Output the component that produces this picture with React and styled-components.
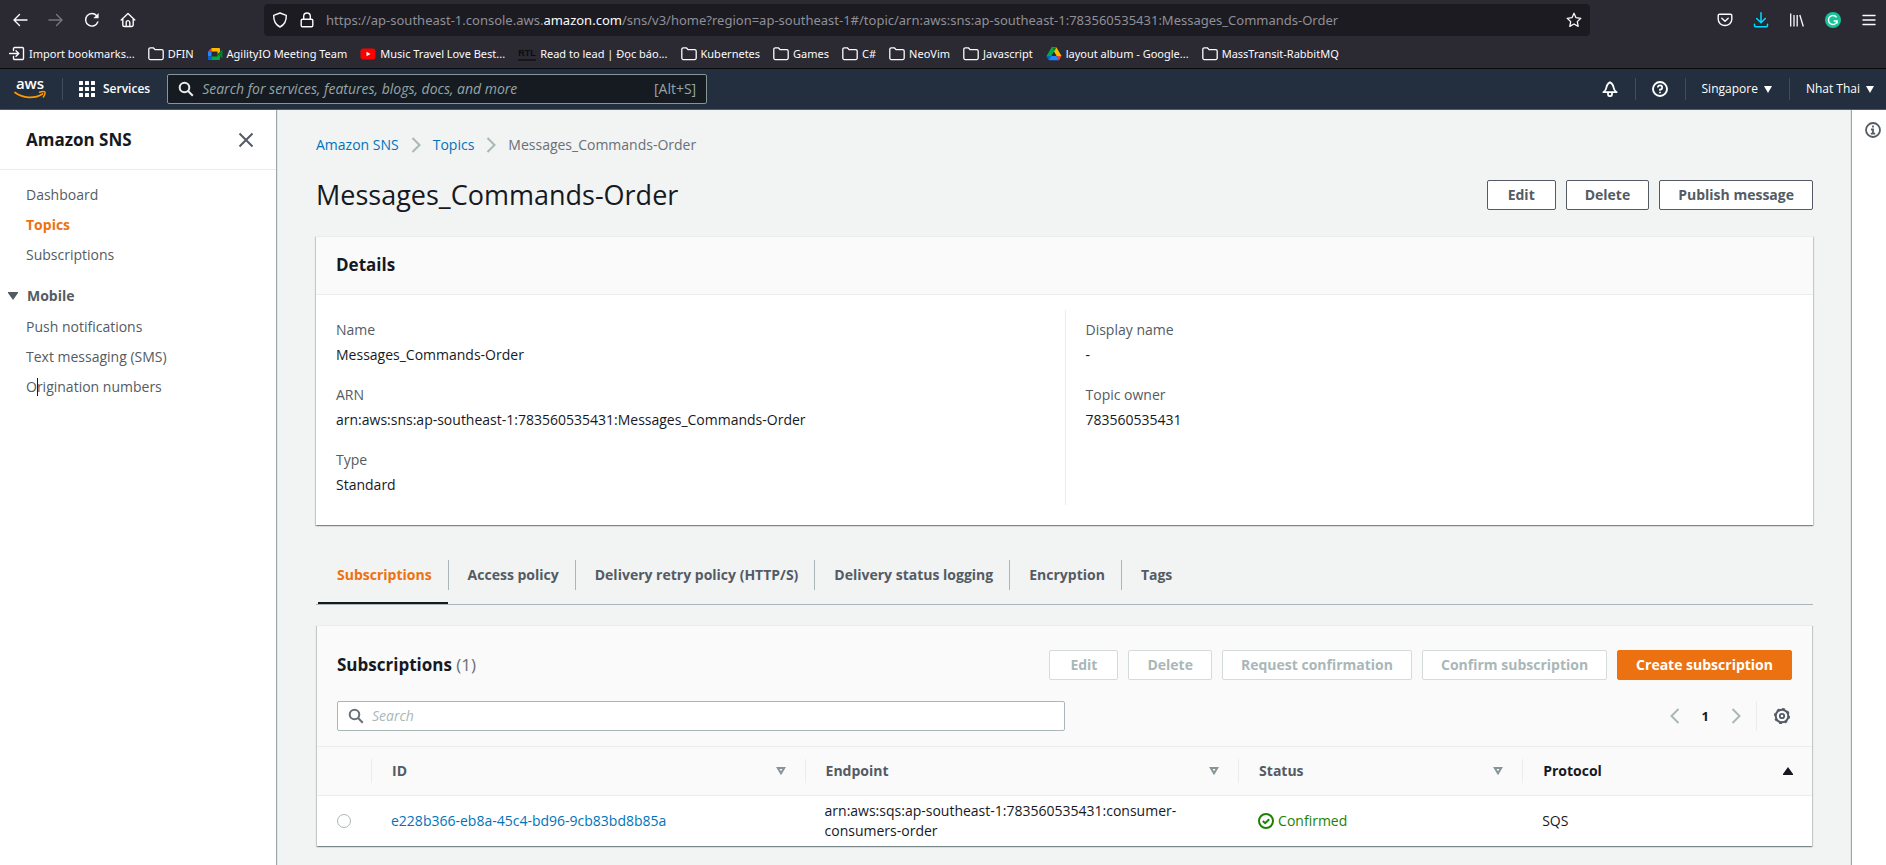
import React from 'react';
import styled, { createGlobalStyle, css } from 'styled-components';

const GlobalStyle = createGlobalStyle`
  * { box-sizing: border-box; }
  body {
    margin: 0;
    background: #f2f3f3;
    color: #16191f;
    font: 14px/22px "Open Sans", "Noto Sans", sans-serif;
  }
  button, input { font: inherit; color: inherit; }
  a { text-decoration: none; }
  svg { display: block; flex: none; }
  h1, h2, ul, dl, dd, ol { margin: 0; padding: 0; }
  ul, ol { list-style: none; }
`;

const Page = styled.div`
  display: flex;
  flex-direction: column;
  min-height: 100vh;
`;

/* ---------- browser chrome ---------- */

const Chrome = styled.header`
  background: #2b2a33;
  color: #fbfbfe;
  border-bottom: 1px solid #0c0c0d;
  font-family: "Noto Sans", "Open Sans", sans-serif;
`;

const Toolbar = styled.div`
  display: flex;
  align-items: center;
  height: 40px;
  padding: 0 9px 0 12px;
`;

const ToolGroup = styled.div`
  display: flex;
  gap: 20px;
`;

const IconButton = styled.button`
  display: grid;
  place-items: center;
  padding: 0;
  border: 0;
  background: none;
  color: ${(p) => p.$color || 'inherit'};
  cursor: pointer;
`;

const UrlBar = styled.div`
  flex: 1;
  display: flex;
  align-items: center;
  gap: 11px;
  height: 32px;
  min-width: 0;
  margin: 0 127px 0 128px;
  padding: 0 8px;
  border-radius: 4px;
  background: #1c1b22;
`;

const UrlText = styled.div`
  flex: 1;
  min-width: 0;
  overflow: hidden;
  white-space: nowrap;
  font-size: 13px;
  color: #8f8f96;
  b { font-weight: 400; color: #fbfbfe; }
`;

const Bookmarks = styled.nav`
  display: flex;
  align-items: center;
  gap: 13px;
  height: 28px;
  padding: 0 9px;
  overflow: hidden;
`;

const Bookmark = styled.a`
  display: flex;
  align-items: center;
  gap: 4px;
  color: #fbfbfe;
  font-size: 11px;
  line-height: 16px;
  white-space: nowrap;
`;

/* ---------- console navigation ---------- */

const ConsoleNav = styled.nav`
  display: flex;
  align-items: center;
  height: 41px;
  background: #232f3e;
  border-bottom: 1px solid #545b64;
  color: #fff;
  font-size: 12px;
`;

const LogoLink = styled.a`
  padding: 0 15px 0 14px;
`;

const NavCell = styled.div`
  display: flex;
  align-items: center;
  height: 22px;
  padding: 0 ${(p) => (p.$end ? 12 : 17)}px 0 16px;
  border-left: 1px solid ${(p) => (p.$plain ? 'transparent' : '#414d5c')};
`;

const NavButton = styled.button`
  display: flex;
  align-items: center;
  gap: ${(p) => (p.$strong ? 8 : 6)}px;
  padding: 0;
  border: 0;
  background: none;
  font-weight: ${(p) => (p.$strong ? 600 : 400)};
  cursor: pointer;
`;

const NavSearch = styled.label`
  display: flex;
  align-items: center;
  gap: 8px;
  width: 540px;
  height: 30px;
  padding: 0 10px;
  border: 1px solid #879596;
  border-radius: 2px;
  background: #161b22;
  color: #95a5a6;
  font-size: 14px;
`;

const BareInput = styled.input`
  flex: 1;
  min-width: 0;
  padding: 0;
  border: 0;
  outline: 0;
  background: none;
  &::placeholder {
    color: ${(p) => p.$hint};
    font-style: italic;
    opacity: 1;
  }
`;

const NavRight = styled.div`
  display: flex;
  align-items: center;
  margin-left: auto;
`;

/* ---------- page body ---------- */

const Body = styled.div`
  flex: 1;
  display: flex;
`;

const panelShadow = css`
  box-shadow: 0 1px 1px rgba(0, 28, 36, 0.3), 1px 1px 1px rgba(0, 28, 36, 0.15), -1px 1px 1px rgba(0, 28, 36, 0.15);
`;

const Sidebar = styled.aside`
  flex: none;
  width: 276px;
  background: #fff;
  box-shadow: 1px 0 1px rgba(0, 28, 36, 0.35);
`;

const SidebarHeader = styled.div`
  display: flex;
  align-items: center;
  justify-content: space-between;
  height: 60px;
  padding: 0 22px 0 26px;
  border-bottom: 1px solid #eaeded;
`;

const Heading = styled.h2`
  font-size: 17px;
  line-height: 22px;
  font-weight: 700;
  span { font-weight: 400; color: #687078; }
`;

const SideList = styled.ul`
  display: flex;
  flex-direction: column;
  gap: 8px;
  padding: ${(p) => (p.$nested ? 9 : 14)}px 26px 0;
`;

const SideLink = styled.a`
  position: relative;
  color: ${(p) => (p.$active ? '#ec7211' : '#545b64')};
  font-weight: ${(p) => (p.$active ? 700 : 400)};
`;

const TextCaret = styled.i`
  position: absolute;
  left: 11px;
  top: 1px;
  width: 1px;
  height: 18px;
  background: #16191f;
`;

const SectionToggle = styled.button`
  display: flex;
  align-items: center;
  gap: 9px;
  margin-top: 19px;
  padding: 0 8px;
  border: 0;
  background: none;
  color: #545b64;
  font-weight: 700;
`;

const Main = styled.main`
  flex: 1;
  min-width: 0;
  padding: 24px 39px 20px 40px;
`;

const HelpRail = styled.aside`
  flex: none;
  width: 34px;
  padding-top: 12px;
  padding-left: 13px;
  background: #fff;
  box-shadow: -1px 0 1px rgba(0, 28, 36, 0.35);
`;

const Breadcrumbs = styled.ol`
  display: flex;
  li { display: flex; align-items: center; color: #687078; }
  a { color: #0073bb; }
  svg { margin: 0 12px; color: #aab7b8; }
`;

const Row = styled.div`
  display: flex;
  align-items: center;
  justify-content: space-between;
  gap: 10px;
`;

const TitleRow = styled(Row)`
  margin: 21px 0 23px;
`;

const Title = styled.h1`
  font-size: 27px;
  line-height: 36px;
  font-weight: 400;
`;

const Actions = styled.div`
  display: flex;
  gap: 10px;
`;

const Button = styled.button`
  height: 30px;
  min-width: 69px;
  padding: 0 18px;
  border: 1px solid #545b64;
  border-radius: 2px;
  background: #fff;
  color: #545b64;
  font-weight: 700;
  line-height: 20px;
  white-space: nowrap;
  &:disabled { border-color: #d5dbdb; color: #aab7b8; }
  ${(p) => p.$primary && css`
    border-color: #ec7211;
    background: #ec7211;
    color: #fff;
  `}
`;

const Card = styled.section`
  border-top: 1px solid #eaeded;
  background: #fff;
  ${panelShadow}
`;

const TabPanel = styled(Card)`
  margin: 0 1px;
`;

const CardHeader = styled.div`
  padding: 17px 20px 18px;
  border-bottom: 1px solid #eaeded;
  background: #fafafa;
`;

const DetailGrid = styled.div`
  display: grid;
  grid-template-columns: 1fr 1fr;
  padding: 15px 0 20px;
`;

const DetailColumn = styled.dl`
  display: flex;
  flex-direction: column;
  gap: 18px;
  padding: 9px 20px;
  & + & { border-left: 1px solid #eaeded; }
  dt { margin-bottom: 3px; color: #545b64; }
`;

const TabList = styled.ul`
  display: flex;
  margin: 35px 0 20px;
  padding-left: 2px;
  border-bottom: 1px solid #aab7b8;
`;

const TabItem = styled.li`
  display: flex;
  &:not(:last-child)::after {
    content: '';
    width: 1px;
    height: 30px;
    background: #aab7b8;
  }
`;

const Tab = styled.button`
  height: 44px;
  padding: 0 16px 12px 19px;
  border: 0;
  border-bottom: 2px solid ${(p) => (p.$active ? '#16191f' : 'transparent')};
  background: none;
  color: ${(p) => (p.$active ? '#ec7211' : '#545b64')};
  font-weight: 700;
`;

const TableTools = styled.div`
  padding: 24px 20px 15px;
  background: #fafafa;
`;

const FilterRow = styled(Row)`
  margin-top: 21px;
`;

const FilterBox = styled.label`
  display: flex;
  align-items: center;
  gap: 8px;
  width: 50%;
  height: 30px;
  padding: 0 10px;
  border: 1px solid #aab7b8;
  border-radius: 2px;
  background: #fff;
  color: #687078;
`;

const Pager = styled.div`
  display: flex;
  align-items: center;
  gap: 22px;
  font-size: 13px;
  font-weight: 700;
`;

const PagerSettings = styled.div`
  display: flex;
  align-items: center;
  height: 30px;
  margin-left: -7px;
  padding: 0 2px 0 17px;
  border-left: 1px solid #eaeded;
`;

const Table = styled.table`
  width: 100%;
  table-layout: fixed;
  border-collapse: collapse;
  td { height: 50px; padding: 5px 20px; line-height: 20px; }
  a { color: #0073bb; }
`;

const Col = styled.col`
  width: ${(p) => p.$width};
`;

const HeadCell = styled.th`
  height: 49px;
  padding: 0;
  border: solid #eaeded;
  border-width: 1px 0;
  background: #fafafa;
  color: ${(p) => (p.$sorted ? '#16191f' : '#545b64')};
  text-align: left;
`;

const HeadInner = styled.div`
  display: flex;
  align-items: center;
  justify-content: space-between;
  height: 24px;
  padding: 0 19px 0 20px;
  border-left: 1px solid #eaeded;
`;

const Radio = styled.input`
  appearance: none;
  display: block;
  width: 14px;
  height: 14px;
  margin: 0;
  border: 1px solid #aab7b8;
  border-radius: 50%;
  background: #fff;
`;

const Status = styled.span`
  display: flex;
  align-items: center;
  gap: 4px;
  color: #1d8102;
`;

/* ---------- icons ---------- */

const Icon = ({ size = 16, sw = 2, children, ...rest }) => (
  <svg width={size} height={size} viewBox="0 0 16 16" fill="none" stroke="currentColor" strokeWidth={sw} aria-hidden="true" {...rest}>
    {children}
  </svg>
);

const Back = () => <Icon sw="1.4"><path d="M15 8H2M7.5 2.5 2 8l5.5 5.5" strokeLinecap="round" strokeLinejoin="round" /></Icon>;
const Forward = () => <Icon sw="1.4"><path d="M1 8h13M8.5 2.5 14 8l-5.500 5.500" strokeLinecap="round" strokeLinejoin="round" /></Icon>;
const Reload = () => <Icon sw="1.4"><path d="M13.800 10A6.300 6.300 0 1 1 12.700 3.700" strokeLinecap="round" /><path d="M14.600 1v5.200H9.400z" fill="currentColor" stroke="none" /></Icon>;
const HomeIcon = () => <Icon sw="1.4"><path d="M1.200 8 8 1.500 14.800 8M2.800 6.800V13a1.500 1.500 0 0 0 1.500 1.500h7.400a1.500 1.500 0 0 0 1.500-1.500V6.800M6.200 14.300V10.400a1.800 1.800 0 0 1 3.600 0v3.900" strokeLinecap="round" strokeLinejoin="round" /></Icon>;
const Shield = () => <Icon sw="1.4"><path d="M8 1 14.300 3.300C14.500 8.500 12.500 12.800 8 15 3.500 12.800 1.500 8.500 1.700 3.300z" strokeLinejoin="round" /></Icon>;
const Lock = () => <Icon sw="1.400"><rect x="2.200" y="7.200" width="11.600" height="7.600" rx="1.300" /><path d="M4.700 7V4.300a3.300 3.300 0 0 1 6.600 0V7" /></Icon>;
const StarIcon = () => <Icon sw="1.300"><path d="m8 1.300 2 4.400 4.800.6-3.500 3.300.9 4.800L8 12l-4.200 2.400.9-4.800L1.200 6.300 6 5.700z" strokeLinejoin="round" /></Icon>;
const Pocket = () => <Icon sw="1.400"><path d="M2.500 2.200h11a1.300 1.300 0 0 1 1.300 1.300v3.700a6.800 6.300 0 0 1-13.600 0V3.500a1.300 1.300 0 0 1 1.300-1.300z" /><path d="m4.800 6.300 3.200 3 3.200-3" strokeLinecap="round" strokeLinejoin="round" /></Icon>;
const Download = () => <Icon sw="1.500"><path d="M8 .8v9.700M3.700 6.500 8 10.700l4.300-4.200M1.500 12.200v1.300a1.300 1.300 0 0 0 1.300 1.300h10.400a1.300 1.300 0 0 0 1.300-1.300v-1.300" strokeLinecap="round" strokeLinejoin="round" /></Icon>;
const Library = () => <Icon sw="1.300"><path d="M1.700 1.500v13M5 3v11.500M8.200 3v11.500M10.800 3l3.500 11.500" /></Icon>;
const Grammarly = () => (
  <Icon>
    <circle cx="8" cy="8" r="8" fill="#15c39a" stroke="none" />
    <path d="M11.600 5.300A4.500 4.500 0 1 0 12 10M8.700 9h3.400v2.600" stroke="#fff" strokeWidth="1.400" />
  </Icon>
);
const Menu = () => <Icon sw="1.400"><path d="M2 3.500h12M2 8h12M2 12.500h12" strokeLinecap="round" /></Icon>;
const ImportIcon = () => <Icon sw="1.400"><path d="M4.500 4.500v-2A1.200 1.200 0 0 1 5.700 1.500h7.600a1.200 1.200 0 0 1 1.200 1.200v9.600a1.200 1.200 0 0 1-1.200 1.200H5.700a1.200 1.200 0 0 1-1.200-1.200v-1.800M.5 7.500h9M7 4.700l2.800 2.800L7 10.300" strokeLinecap="round" strokeLinejoin="round" /></Icon>;
const Folder = () => <Icon sw="1.300"><path d="M.8 3.300A1.500 1.500 0 0 1 2.300 1.800h3l1.900 1.900h6.500a1.500 1.500 0 0 1 1.500 1.500v6.900a1.500 1.500 0 0 1-1.500 1.500H2.300a1.500 1.500 0 0 1-1.500-1.500z" strokeLinejoin="round" /></Icon>;
const Meet = () => (
  <Icon stroke="none">
    <path d="M4.500 2v3.500H1z" fill="#ea4335" />
    <path d="M1 5.500h3.500v5H1z" fill="#2684fc" />
    <path d="M1 10.500h3.500V14H2a1 1 0 0 1-1-1z" fill="#0066da" />
    <path d="M4.500 10.500h6V8l2.500 2v3a1 1 0 0 1-1 1H4.500z" fill="#00ac47" />
    <path d="M4.500 2H12a1 1 0 0 1 1 1v3l-2.500 2V5.500h-6z" fill="#ffba00" />
    <path d="M10.500 8 15.500 3.500v9z" fill="#00832d" />
  </Icon>
);
const Youtube = () => (
  <Icon stroke="none">
    <rect x=".5" y="2.500" width="15" height="11" rx="3" fill="#f00" />
    <path d="M6.500 5.700v4.600l4-2.300z" fill="#fff" />
  </Icon>
);
const RtlMark = styled.span`
  width: 18px;
  border-bottom: 2px solid #17161c;
  color: #0c0c0d;
  font: 700 9px/12px "Liberation Sans", Arial, sans-serif;
`;
const Drive = () => (
  <Icon stroke="none">
    <path d="M5.500 1.500h2.700L8 6 3 14.300.5 10z" fill="#00ac47" />
    <path d="M5.500 1.500h5L15.500 10h-5z" fill="#ffba00" />
    <path d="M5.500 1.500h5L8 5.800z" fill="#00832d" />
    <path d="M5.500 10h5L8 5.800z" fill="#2b2a33" />
    <path d="M.5 10h5L3 14.300z" fill="#0066da" />
    <path d="M5.500 10h5l2.500 4.300H3z" fill="#2684fc" />
    <path d="M10.500 10h5L13 14.300z" fill="#ea4335" />
  </Icon>
);

const AwsLogo = () => (
  <svg width="33" height="34" viewBox="0 -6 33 34" aria-label="aws" role="img">
    <text x="16" y="11" textAnchor="middle" fontFamily="Open Sans, sans-serif" fontSize="15" fontWeight="600" fill="#fff">aws</text>
    <path d="M1 14.500c8 6 19.500 6.500 27.500 1.500" fill="none" stroke="#f90" strokeWidth="1.700" strokeLinecap="round" />
    <path d="M25.500 14.300c2-.8 4.500-1 5.300-.4.600.7 0 3.200-1.500 5" fill="none" stroke="#f90" strokeWidth="1.500" strokeLinecap="round" />
  </svg>
);
const Apps = () => (
  <Icon stroke="none" fill="currentColor">
    {[0, 6, 12].map((y) => [0, 6, 12].map((x) => <rect key={`${x}-${y}`} x={x} y={y} width="4" height="4" rx=".5" />))}
  </Icon>
);
const SearchIcon = ({ color }) => <Icon color={color}><circle cx="6.500" cy="6.500" r="4.800" /><path d="m10 10 4.800 4.800" /></Icon>;
const Bell = () => <Icon sw="1.800"><path d="M8 1.200 C9.500 2 11.300 4 11.600 6.500 C11.800 8.500 12.800 9.900 14.600 11.200H1.400C3.200 9.900 4.200 8.500 4.400 6.500 C4.700 4 6.500 2 8 1.200zM6 11.500v1.700a2 2 0 0 0 4 0v-1.700" strokeLinejoin="round" /></Icon>;
const Help = () => <Icon sw="1.900"><circle cx="8" cy="8" r="7" /><path d="M5.800 6.500A2.200 2.200 0 1 1 8 8.700v1.100M8 10.800v1.500" strokeWidth="1.700" /></Icon>;
const Caret = () => <svg width="8" height="7" viewBox="0 0 8 7" aria-hidden="true"><path d="M0 0h8L4 7z" fill="currentColor" /></svg>;
const CloseIcon = () => <Icon><path d="m1.500 1.500 13 13M14.500 1.500l-13 13" /></Icon>;
const SectionCaret = () => <svg width="10" height="8" viewBox="0 0 10 8" aria-hidden="true"><path d="M0 0h10v1L5 8 0 1z" fill="currentColor" /></svg>;
const Chevron = ({ left }) => <svg width="10" height="16" viewBox="0 0 10 16" fill="none" stroke="currentColor" strokeWidth="2" aria-hidden="true"><path d={left ? 'M8.500 1 1.500 8l7 7' : 'm1.500 1 7 7-7 7'} /></svg>;
const Info = () => <Icon sw="1.800"><circle cx="8" cy="8" r="7" /><path d="M8 3.500v2M6 7.500h2v4M5.800 11.700h4.400" strokeWidth="1.800" /></Icon>;
const SortDown = () => <svg width="10" height="8" viewBox="0 0 10 8" fill="none" stroke="#879596" strokeWidth="2" aria-hidden="true"><path d="M1.800 1h6.400L5 6.300z" /></svg>;
const SortUp = () => <svg width="10" height="8" viewBox="0 0 10 8" aria-hidden="true"><path d="M0 8h10V7L5 0 0 7z" fill="#16191f" /></svg>;
const Gear = () => (
  <Icon>
    <circle cx="8" cy="8" r="6.300" />
    <circle cx="8" cy="8" r="7.400" strokeWidth="1.300" strokeDasharray="2.900 2.910" />
    <circle cx="8" cy="8" r="2.200" strokeWidth="1.800" />
  </Icon>
);
const CheckIcon = () => <Icon><circle cx="8" cy="8" r="7" /><path d="m4.800 8 2.400 2.200 4-4" /></Icon>;

/* ---------- data ---------- */

const bookmarks = [
  [ImportIcon, 'Import bookmarks...'],
  [Folder, 'DFIN'],
  [Meet, 'AgilityIO Meeting Team'],
  [Youtube, 'Music Travel Love Best...'],
  [null, 'Read to lead | Đọc báo...'],
  [Folder, 'Kubernetes'],
  [Folder, 'Games'],
  [Folder, 'C#'],
  [Folder, 'NeoVim'],
  [Folder, 'Javascript'],
  [Drive, 'layout album - Google...'],
  [Folder, 'MassTransit-RabbitMQ'],
];

const details = [
  [['Name', 'Messages_Commands-Order'], ['ARN', 'arn:aws:sns:ap-southeast-1:783560535431:Messages_Commands-Order'], ['Type', 'Standard']],
  [['Display name', '-'], ['Topic owner', '783560535431']],
];

const tabs = ['Subscriptions', 'Access policy', 'Delivery retry policy (HTTP/S)', 'Delivery status logging', 'Encryption', 'Tags'];

export default function App() {
  return (
    <Page>
      <GlobalStyle />
      <Chrome>
        <Toolbar>
          <ToolGroup>
            <IconButton aria-label="Back"><Back /></IconButton>
            <IconButton aria-label="Forward" $color="#77767e"><Forward /></IconButton>
            <IconButton aria-label="Reload"><Reload /></IconButton>
            <IconButton aria-label="Home"><HomeIcon /></IconButton>
          </ToolGroup>
          <UrlBar>
            <Shield />
            <Lock />
            <UrlText role="textbox" aria-label="Address" tabIndex={0}>
              https://ap-southeast-1.console.aws.<b>amazon.com</b>/sns/v3/home?region=ap-southeast-1#/topic/arn:aws:sns:ap-southeast-1:783560535431:Messages_Commands-Order
            </UrlText>
            <IconButton aria-label="Bookmark this page"><StarIcon /></IconButton>
          </UrlBar>
          <ToolGroup>
            <IconButton aria-label="Pocket"><Pocket /></IconButton>
            <IconButton aria-label="Downloads" $color="#00ddff"><Download /></IconButton>
            <IconButton aria-label="Library"><Library /></IconButton>
            <IconButton aria-label="Grammarly"><Grammarly /></IconButton>
            <IconButton aria-label="Menu"><Menu /></IconButton>
          </ToolGroup>
        </Toolbar>
        <Bookmarks aria-label="Bookmarks">
          {bookmarks.map(([Mark, label]) => (
            <Bookmark href="#" key={label}>
              {Mark ? <Mark /> : <RtlMark aria-hidden="true">RTL</RtlMark>}
              {label}
            </Bookmark>
          ))}
        </Bookmarks>
      </Chrome>

      <ConsoleNav aria-label="Console">
        <LogoLink href="#"><AwsLogo /></LogoLink>
        <NavCell>
          <NavButton $strong><Apps />Services</NavButton>
        </NavCell>
        <NavSearch>
          <SearchIcon color="#eaeded" />
          <BareInput $hint="#95a5a6" aria-label="Search services" placeholder="Search for services, features, blogs, docs, and more" />
          <span>[Alt+S]</span>
        </NavSearch>
        <NavRight>
          <NavCell $plain><IconButton aria-label="Notifications"><Bell /></IconButton></NavCell>
          <NavCell><IconButton aria-label="Help"><Help /></IconButton></NavCell>
          <NavCell><NavButton>Singapore<Caret /></NavButton></NavCell>
          <NavCell $end><NavButton>Nhat Thai<Caret /></NavButton></NavCell>
        </NavRight>
      </ConsoleNav>

      <Body>
        <Sidebar>
          <SidebarHeader>
            <Heading>Amazon SNS</Heading>
            <IconButton aria-label="Close navigation" $color="#545b64"><CloseIcon /></IconButton>
          </SidebarHeader>
          <SideList>
            <li><SideLink href="#">Dashboard</SideLink></li>
            <li><SideLink href="#" $active>Topics</SideLink></li>
            <li><SideLink href="#">Subscriptions</SideLink></li>
          </SideList>
          <SectionToggle aria-expanded="true"><SectionCaret />Mobile</SectionToggle>
          <SideList $nested>
            <li><SideLink href="#">Push notifications</SideLink></li>
            <li><SideLink href="#">Text messaging (SMS)</SideLink></li>
            <li><SideLink href="#">Origination numbers<TextCaret /></SideLink></li>
          </SideList>
        </Sidebar>

        <Main>
          <Breadcrumbs>
            <li><a href="#">Amazon SNS</a><Chevron /></li>
            <li><a href="#">Topics</a><Chevron /></li>
            <li>Messages_Commands-Order</li>
          </Breadcrumbs>
          <TitleRow>
            <Title>Messages_Commands-Order</Title>
            <Actions>
              <Button>Edit</Button>
              <Button>Delete</Button>
              <Button>Publish message</Button>
            </Actions>
          </TitleRow>

          <Card>
            <CardHeader><Heading>Details</Heading></CardHeader>
            <DetailGrid>
              {details.map((column, i) => (
                <DetailColumn key={i}>
                  {column.map(([term, value]) => (
                    <div key={term}><dt>{term}</dt><dd>{value}</dd></div>
                  ))}
                </DetailColumn>
              ))}
            </DetailGrid>
          </Card>

          <TabList role="tablist">
            {tabs.map((label, i) => (
              <TabItem key={label} role="presentation">
                <Tab role="tab" aria-selected={i === 0} $active={i === 0}>{label}</Tab>
              </TabItem>
            ))}
          </TabList>

          <TabPanel role="tabpanel">
            <TableTools>
              <Row>
                <Heading>Subscriptions <span>(1)</span></Heading>
                <Actions>
                  <Button disabled>Edit</Button>
                  <Button disabled>Delete</Button>
                  <Button disabled>Request confirmation</Button>
                  <Button disabled>Confirm subscription</Button>
                  <Button $primary>Create subscription</Button>
                </Actions>
              </Row>
              <FilterRow>
                <FilterBox>
                  <SearchIcon />
                  <BareInput $hint="#aab7b8" aria-label="Search subscriptions" placeholder="Search" />
                </FilterBox>
                <Pager>
                  <IconButton aria-label="Previous page" $color="#aab7b8"><Chevron left /></IconButton>
                  <span>1</span>
                  <IconButton aria-label="Next page" $color="#aab7b8"><Chevron /></IconButton>
                  <PagerSettings>
                    <IconButton aria-label="Preferences" $color="#545b64"><Gear /></IconButton>
                  </PagerSettings>
                </Pager>
              </FilterRow>
            </TableTools>
            <Table>
              <colgroup>
                <Col $width="54px" />
                <Col $width="29%" />
                <Col $width="29%" />
                <Col $width="19%" />
                <Col />
              </colgroup>
              <thead>
                <tr>
                  <HeadCell aria-label="Select" />
                  <HeadCell scope="col"><HeadInner>ID<SortDown /></HeadInner></HeadCell>
                  <HeadCell scope="col"><HeadInner>Endpoint<SortDown /></HeadInner></HeadCell>
                  <HeadCell scope="col"><HeadInner>Status<SortDown /></HeadInner></HeadCell>
                  <HeadCell scope="col" $sorted aria-sort="ascending"><HeadInner>Protocol<SortUp /></HeadInner></HeadCell>
                </tr>
              </thead>
              <tbody>
                <tr>
                  <td><Radio type="radio" name="subscription" aria-label="Select e228b366-eb8a-45c4-bd96-9cb83bd8b85a" /></td>
                  <td><a href="#">e228b366-eb8a-45c4-bd96-9cb83bd8b85a</a></td>
                  <td>arn:aws:sqs:ap-southeast-1:783560535431:consumer-consumers-order</td>
                  <td><Status><CheckIcon />Confirmed</Status></td>
                  <td>SQS</td>
                </tr>
              </tbody>
            </Table>
          </TabPanel>
        </Main>

        <HelpRail>
          <IconButton aria-label="Open help panel" $color="#545b64"><Info /></IconButton>
        </HelpRail>
      </Body>
    </Page>
  );
}
